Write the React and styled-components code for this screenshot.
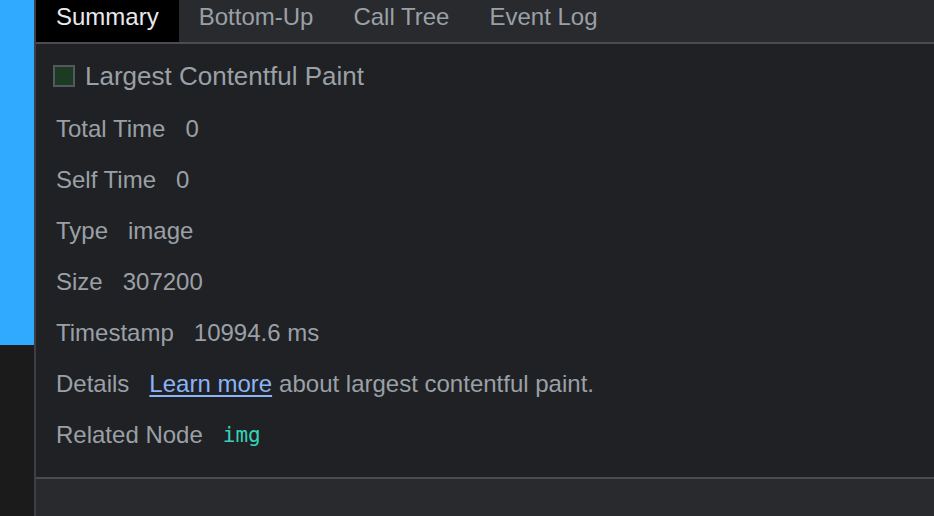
import React from "react";
import styled, { createGlobalStyle } from "styled-components";

const Global = createGlobalStyle`
  html, body { margin: 0; padding: 0; background: #202124; }
  body { font-family: "Liberation Sans", Arial, Helvetica, sans-serif; }
  #root { width: 934px; height: 516px; overflow: hidden; }
`;

const Page = styled.div`
  display: flex;
  width: 934px;
  height: 516px;
`;

const Sidebar = styled.div`
  width: 34px;
  display: flex;
  flex-direction: column;
  border-right: 2px solid #3e3f42;
  background: #1b1b1b;
`;

const SidebarTrack = styled.div`
  height: 345px;
  background: #2faaff;
`;

const Main = styled.div`
  flex: 1;
  display: flex;
  flex-direction: column;
  min-width: 0;
`;

const TabBar = styled.div`
  height: 42px;
  display: flex;
  background: #292a2e;
  border-bottom: 2px solid #4a4c50;
`;

const Tab = styled.div`
  display: flex;
  align-items: center;
  padding: 0 20px 8px;
  font-size: 24px;
  color: ${(p) => (p.$active ? "#e8eaed" : "#9aa0a6")};
  background: ${(p) => (p.$active ? "#000000" : "transparent")};
  white-space: nowrap;
`;

const Content = styled.div`
  flex: 1;
  background: #202124;
  padding: 8px 0 0 0;
  display: flex;
  flex-direction: column;
`;

const TitleRow = styled.div`
  height: 48px;
  display: flex;
  align-items: center;
  padding-left: 17px;
  margin-bottom: 3px;
  gap: 10px;
`;

const Swatch = styled.div`
  width: 18px;
  height: 18px;
  border: 2px solid #55585c;
  background: #1d3a24;
`;

const Title = styled.div`
  font-size: 26px;
  color: #9aa0a6;
  white-space: nowrap;
`;

const Row = styled.div`
  height: 51px;
  display: flex;
  align-items: center;
  padding-left: 20px;
  font-size: 24px;
  color: #9aa0a6;
  white-space: nowrap;
`;

const Label = styled.span`
  margin-right: 20px;
`;

const Value = styled.span`
  color: #9aa0a6;
`;

const Link = styled.a`
  color: #8ab4f8;
  text-decoration: underline;
  text-underline-offset: 3px;
  margin-right: 7px;
  cursor: pointer;
`;

const Node = styled.span`
  font-family: "DejaVu Sans Mono", "Liberation Mono", monospace;
  font-size: 21px;
  color: #36d3b8;
`;

const Footer = styled.div`
  height: 37px;
  border-top: 2px solid #4a4c50;
  background: #292a2d;
`;

const rows = [
  ["Total Time", "0"],
  ["Self Time", "0"],
  ["Type", "image"],
  ["Size", "307200"],
  ["Timestamp", "10994.6 ms"],
];

export default function App() {
  return (
    <>
      <Global />
      <Page>
        <Sidebar>
          <SidebarTrack />
        </Sidebar>
        <Main>
          <TabBar>
            <Tab $active>Summary</Tab>
            <Tab>Bottom-Up</Tab>
            <Tab>Call Tree</Tab>
            <Tab>Event Log</Tab>
          </TabBar>
          <Content>
            <TitleRow>
              <Swatch />
              <Title>Largest Contentful Paint</Title>
            </TitleRow>
            {rows.map(([l, v]) => (
              <Row key={l}>
                <Label>{l}</Label>
                <Value>{v}</Value>
              </Row>
            ))}
            <Row>
              <Label>Details</Label>
              <Link>Learn more</Link>
              <Value>about largest contentful paint.</Value>
            </Row>
            <Row>
              <Label>Related Node</Label>
              <Node>img</Node>
            </Row>
          </Content>
          <Footer />
        </Main>
      </Page>
    </>
  );
}
